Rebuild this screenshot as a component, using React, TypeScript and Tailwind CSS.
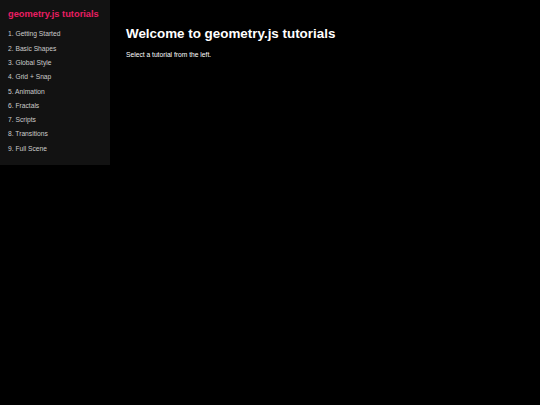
import React from "react";

const items = [
  "1. Getting Started",
  "2. Basic Shapes",
  "3. Global Style",
  "4. Grid + Snap",
  "5. Animation",
  "6. Fractals",
  "7. Scripts",
  "8. Transitions",
  "9. Full Scene",
];

export default function App() {
  return (
    <div
      className="flex items-start w-[540px] h-[405px] bg-black text-white"
      style={{ fontFamily: '"Liberation Sans", Arial, sans-serif' }}
    >
      <aside className="w-[110px] shrink-0 bg-[#121212] pt-[8.5px] pb-[9px] px-[8px]">
        <div className="text-[9.3px] leading-[10.8px] font-bold text-[#e91e63] whitespace-nowrap">
          geometry.js tutorials
        </div>
        <ul className="mt-[7.8px]">
          {items.map((t) => (
            <li
              key={t}
              className="text-[6.7px] leading-[7.7px] py-[3.3px] text-[#cccccc] whitespace-nowrap"
            >
              {t}
            </li>
          ))}
        </ul>
      </aside>
      <main className="flex-1 pl-[16px] pt-[26px]">
        <h1 className="text-[13.4px] leading-[15.4px] font-bold text-white whitespace-nowrap">
          Welcome to geometry.js tutorials
        </h1>
        <p className="mt-[9.4px] text-[6.7px] leading-[7.7px] text-white">
          Select a tutorial from the left.
        </p>
      </main>
    </div>
  );
}
